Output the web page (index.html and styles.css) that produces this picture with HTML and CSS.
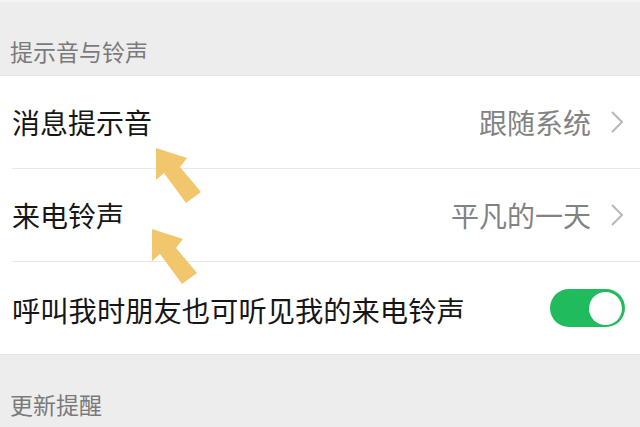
FILE: index.html
```html
<!DOCTYPE html>
<html lang="zh-CN">
<head>
<meta charset="utf-8">
<link rel="stylesheet" href="styles.css">
</head>
<body>
<div class="page">
  <div class="group-title">提示音与铃声</div>
  <div class="group">
    <div class="row">
      <span class="label">消息提示音</span>
      <span class="value">跟随系统</span>
      <svg class="chev" width="12" height="22" viewBox="0 0 12 22"><path d="M1 1 L11 11 L1 21" fill="none" stroke="#b8b8b8" stroke-width="2"/></svg>
    </div>
    <div class="row">
      <span class="label">来电铃声</span>
      <span class="value">平凡的一天</span>
      <svg class="chev" width="12" height="22" viewBox="0 0 12 22"><path d="M1 1 L11 11 L1 21" fill="none" stroke="#b8b8b8" stroke-width="2"/></svg>
    </div>
    <div class="row">
      <span class="label label-long">呼叫我时朋友也可听见我的来电铃声</span>
      <span class="toggle"><span class="knob"></span></span>
    </div>
  </div>
  <div class="group-title">更新提醒</div>
  <svg class="arrow arrow-1" width="50" height="60" viewBox="-2 -2 50 60"><polygon points="0,0 31,10 24,19 45,44 30,55 8,25 0,32" fill="#f2c66d"/></svg>
  <svg class="arrow arrow-2" width="50" height="60" viewBox="-2 -2 50 60"><polygon points="0,0 31,10 24,19 45,44 30,55 8,25 0,32" fill="#f2c66d"/></svg>
</div>
</body>
</html>
```

FILE: styles.css
```css
html, body {
  margin: 0;
  padding: 0;
  background: #ededed;
  font-family: "Noto Sans CJK SC", "Noto Sans", sans-serif;
  overflow: hidden;
}
.page {
  position: relative;
  width: 640px;
  height: 427px;
  border-top: 2px solid #f3f3f3;
  box-sizing: border-box;
}
.group-title {
  height: 74px;
  box-sizing: border-box;
  padding: 35px 0 0 10px;
  font-size: 23px;
  line-height: 28px;
  color: #7a7a7a;
  border-bottom: 1px solid #e4e4e4;
}
.group {
  background: #ffffff;
  border-bottom: 1px solid #e4e4e4;
}
.row {
  display: flex;
  align-items: center;
  height: 92px;
  margin-left: 12px;
  padding-right: 17px;
  border-bottom: 1px solid #e8e8e8;
}
.row:last-child {
  border-bottom: none;
}
.label {
  flex: 1;
  font-size: 28px;
  color: #161616;
  line-height: 40px;
}
.label-long {
  font-size: 28.3px;
  padding-top: 4px;
}
.value {
  font-size: 28px;
  color: #828282;
  line-height: 40px;
  margin-right: 20px;
}
.chev {
  display: block;
}
.toggle {
  display: flex;
  justify-content: flex-end;
  align-items: center;
  width: 75px;
  height: 38px;
  border-radius: 19px;
  background: #1fbb5c;
  padding-right: 3px;
  box-sizing: border-box;
  margin-right: -2px;
}
.knob {
  width: 33px;
  height: 33px;
  border-radius: 50%;
  background: #ffffff;
}
.arrow {
  position: absolute;
}
.arrow-1 {
  left: 154px;
  top: 144px;
}
.arrow-2 {
  left: 150px;
  top: 225px;
}
```
